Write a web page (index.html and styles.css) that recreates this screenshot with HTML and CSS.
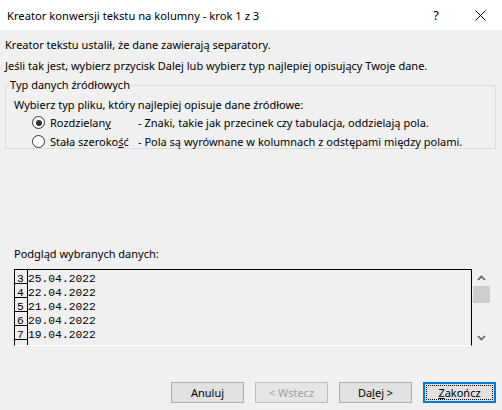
FILE: index.html
```html
<!DOCTYPE html>
<html lang="pl">
<head>
    <meta charset="UTF-8">
    <title>Kreator konwersji tekstu na kolumny</title>
    <link rel="stylesheet" href="styles.css">
</head>
<body>
    <div class="titlebar">
        <span class="title">Kreator konwersji tekstu na kolumny - krok 1 z 3</span>
        <span class="help">?</span>
        <span class="close">
            <svg width="11" height="11" viewBox="0 0 11 11"><path d="M0.5 0.5 L10.5 10.5 M10.5 0.5 L0.5 10.5" stroke="#000" stroke-width="1" fill="none"/></svg>
        </span>
    </div>

    <div class="content">
        <p class="line">Kreator tekstu ustalił, że dane zawierają separatory.</p>
        <p class="line">Jeśli tak jest, wybierz przycisk Dalej lub wybierz typ najlepiej opisujący Twoje dane.</p>

        <fieldset class="group">
            <legend>Typ danych źródłowych</legend>
            <div class="group-hint">Wybierz typ pliku, który najlepiej opisuje dane źródłowe:</div>
            <div class="radio-row">
                <span class="radio checked"></span>
                <span class="radio-label">Rozdzielan<u>y</u></span>
                <span class="radio-desc">- Znaki, takie jak przecinek czy tabulacja, oddzielają pola.</span>
            </div>
            <div class="radio-row">
                <span class="radio"></span>
                <span class="radio-label">Stała szeroko<u>ś</u>ć</span>
                <span class="radio-desc">- Pola są wyrównane w kolumnach z odstępami między polami.</span>
            </div>
        </fieldset>

        <div class="preview-label">Podgląd wybranych danych:</div>
        <div class="preview">
            <div class="grid">
                <div class="row"><span class="num">3</span><span class="cell">25.04.2022</span></div>
                <div class="row"><span class="num">4</span><span class="cell">22.04.2022</span></div>
                <div class="row"><span class="num">5</span><span class="cell">21.04.2022</span></div>
                <div class="row"><span class="num">6</span><span class="cell">20.04.2022</span></div>
                <div class="row"><span class="num">7</span><span class="cell">19.04.2022</span></div>
                <div class="row"><span class="num"></span><span class="cell"></span></div>
            </div>
            <div class="scrollbar">
                <div class="arrow">
                    <svg width="9" height="6" viewBox="0 0 9 6"><path d="M1 5 L4.5 1.5 L8 5" stroke="#606060" stroke-width="1.6" fill="none"/></svg>
                </div>
                <div class="thumb"></div>
                <div class="track"></div>
                <div class="arrow">
                    <svg width="9" height="6" viewBox="0 0 9 6"><path d="M1 1 L4.5 4.5 L8 1" stroke="#606060" stroke-width="1.6" fill="none"/></svg>
                </div>
            </div>
        </div>
    </div>

    <div class="buttons">
        <button class="btn">Anuluj</button>
        <button class="btn" disabled>&lt; Wstecz</button>
        <button class="btn">Da<u>l</u>ej &gt;</button>
        <button class="btn default"><span class="focus"><u>Z</u>akończ</span></button>
    </div>
</body>
</html>
```

FILE: styles.css
```css
html, body {
    margin: 0;
    padding: 0;
}
body {
    width: 502px;
    height: 410px;
    overflow: hidden;
    background-color: #f0f0f0;
    font-family: "Noto Sans", "DejaVu Sans", sans-serif;
    font-size: 11px;
    color: #000;
}

.titlebar {
    height: 30px;
    background-color: #fff;
    display: flex;
    align-items: center;
}
.title {
    flex: 1;
    padding-left: 7px;
    font-size: 11.2px;
}
.help {
    width: 46px;
    text-align: center;
    font-size: 13px;
    padding-left: 3px;
}
.close {
    width: 43px;
    display: flex;
    justify-content: center;
    align-items: center;
}
.close svg {
    display: block;
}

.content {
    padding-top: 4px;
}
.line {
    margin: 0;
    padding-left: 5px;
    line-height: 21px;
}

.group {
    margin: 2px 6px 0 5px;
    padding: 0 0 0 3px;
    height: 69px;
    border: 1px solid #dcdcdc;
}
.group legend {
    padding: 0 1px;
    line-height: 14px;
}
.group-hint {
    padding-left: 5px;
    margin-top: 5px;
    line-height: 16px;
}
.radio-row {
    display: flex;
    align-items: center;
    height: 19px;
    padding-left: 23px;
}
.radio {
    width: 11px;
    height: 11px;
    border: 1px solid #333;
    border-radius: 50%;
    background-color: #fff;
    position: relative;
    margin-right: 5px;
}
.radio.checked::after {
    content: "";
    position: absolute;
    left: 2.5px;
    top: 2.5px;
    width: 6px;
    height: 6px;
    border-radius: 50%;
    background-color: #333;
}
.radio-label {
    width: 88px;
}

.preview-label {
    margin-top: 97px;
    padding-left: 14px;
    line-height: 15px;
}
.preview {
    margin-top: 8px;
    margin-left: 14px;
    display: flex;
    height: 77px;
}
.grid {
    width: 456px;
    border-top: 1px solid #000;
    border-left: 1px solid #000;
    border-right: 1px solid #000;
    border-bottom: 1px solid #fff;
    overflow: hidden;
}
.row {
    display: flex;
    height: 14px;
    font-family: "Liberation Mono", "Courier New", monospace;
    font-size: 11.3px;
    color: #000;
}
.num {
    width: 13px;
    box-sizing: border-box;
    border-right: 1px solid #000;
    border-bottom: 1px solid #000;
    padding-left: 2px;
    height: 14px;
    line-height: 18px;
    overflow: hidden;
}
.cell {
    flex: 1;
    height: 14px;
    line-height: 18px;
    overflow: hidden;
}

.scrollbar {
    width: 17px;
    margin-left: 1px;
    display: flex;
    flex-direction: column;
}
.arrow {
    height: 17px;
    display: flex;
    align-items: center;
    justify-content: center;
}
.arrow svg {
    display: block;
}
.thumb {
    height: 17px;
    background-color: #cdcdcd;
}
.track {
    flex: 1;
}

.buttons {
    display: flex;
    justify-content: flex-end;
    gap: 11px;
    margin-top: 36px;
    padding-right: 6px;
}
.btn {
    width: 73px;
    height: 21px;
    box-sizing: border-box;
    padding: 0;
    border: 1px solid #adadad;
    background-color: #e1e1e1;
    font-family: "Noto Sans", "DejaVu Sans", sans-serif;
    font-size: 11px;
    color: #000;
}
.btn:disabled {
    color: #a0a0a0;
    border-color: #bfbfbf;
    background-color: #e6e6e6;
}
.btn.default {
    border: 2px solid #0078d7;
    padding: 1px;
}
.focus {
    display: block;
    height: 100%;
    box-sizing: border-box;
    border: 1px dotted #000;
    line-height: 13px;
}
```
